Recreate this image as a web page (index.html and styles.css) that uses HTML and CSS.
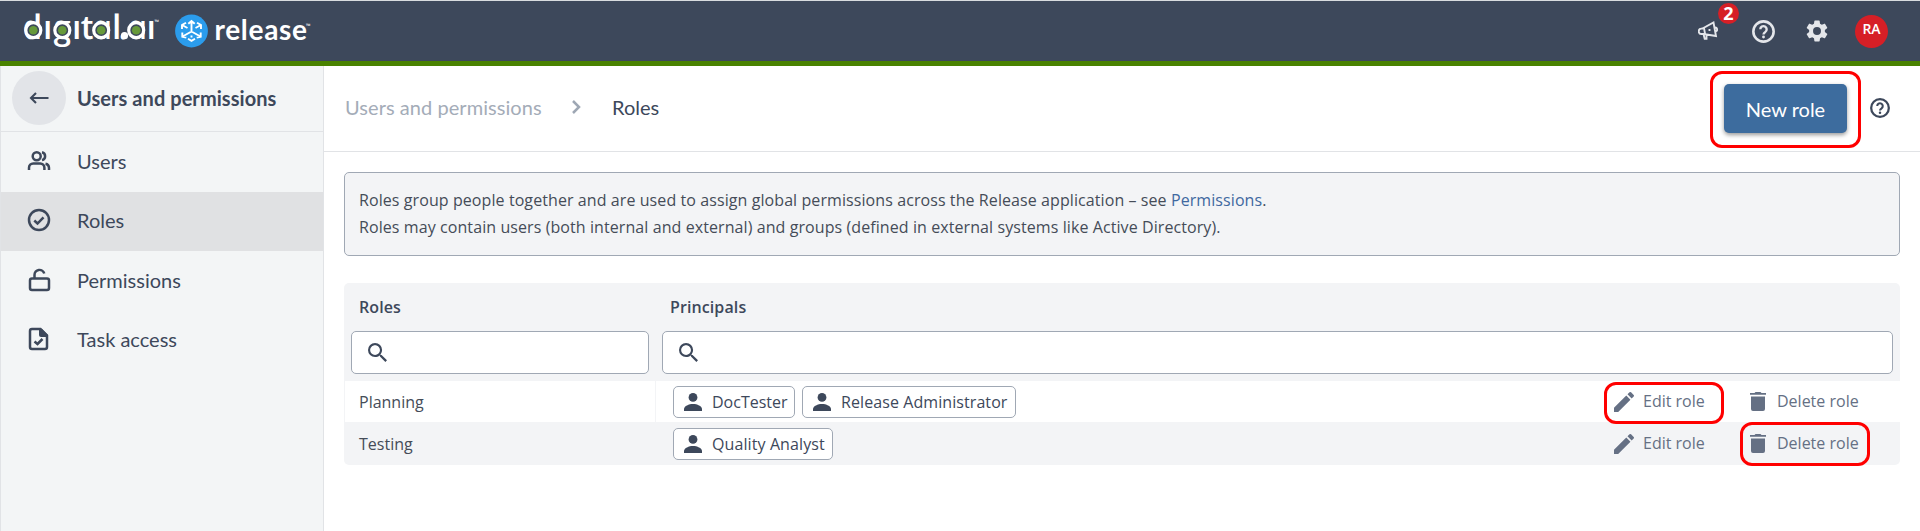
FILE: index.html
```html
<!DOCTYPE html>
<html lang="en">
<head>
<meta charset="utf-8">
<title>Roles</title>
<link rel="stylesheet" href="styles.css">
</head>
<body>
<svg class="defs" width="0" height="0">
  <symbol id="help" viewBox="0 0 24 24"><circle cx="12" cy="12" r="10.6" fill="none" stroke="currentColor" stroke-width="2.700"/><path d="M8.7 9.7a3.3 3.3 0 1 1 5.2 2.7c-1.2.8-1.9 1.3-1.9 2.6" fill="none" stroke="currentColor" stroke-width="2.500"/><circle cx="12" cy="17.7" r="1.5" fill="currentColor"/></symbol>
  <symbol id="search" viewBox="3 3 17.5 17.5"><path fill="currentColor" d="M15.5 14h-.79l-.28-.27A6.471 6.471 0 0 0 16 9.500 6.500 6.500 0 1 0 9.500 16c1.610 0 3.090-.59 4.230-1.570l.27.28v.79l5 4.990L20.490 19l-4.990-5zm-6 0C7.010 14 5 11.990 5 9.500S7.010 5 9.500 5 14 7.010 14 9.500 11.990 14 9.500 14z"/></symbol>
  <symbol id="person" viewBox="0 0 18 18"><circle cx="9" cy="4.400" r="4.400" fill="currentColor"/><path fill="currentColor" d="M0 18v-2c0-3 5-5 9-5s9 2 9 5v2z"/></symbol>
  <symbol id="pencil" viewBox="3 3 18 18"><path fill="currentColor" d="M3 17.250V21h3.750L17.810 9.940l-3.750-3.750L3 17.250zM20.710 7.040a1 1 0 0 0 0-1.410l-2.340-2.340a1 1 0 0 0-1.410 0l-1.830 1.830 3.750 3.750 1.830-1.830z"/></symbol>
  <symbol id="trash" viewBox="0 0 16 19"><path fill="currentColor" d="M1 4.500h14V17a2 2 0 0 1-2 2H3a2 2 0 0 1-2-2zM0 1h4.500L5.500 0h5l1 1H16v1.800H0z"/></symbol>
</svg>
<header class="topbar">
  <svg class="logo" width="320" height="60" viewBox="0 1 320 60" role="img" aria-label="digital.ai release">
    <g transform="translate(0 39.300) skewX(12)"><text class="brand" x="24.500 45 55 74 83 94.500 114 120.500 129.500 148.500">dıgıtal.aı</text></g>
    <g fill="#3d485b" stroke="#fff" stroke-width="3.200"><circle cx="33.300" cy="30.200" r="7.500"/><circle cx="62.300" cy="30.200" r="7.500"/><circle cx="101.200" cy="30.200" r="7.500"/><circle cx="136.200" cy="30.200" r="7.500"/></g>
    <g fill="#67993a"><circle cx="33.300" cy="30.200" r="4.300"/><circle cx="62.300" cy="30.200" r="4.300"/><circle cx="101.200" cy="30.200" r="4.300"/><circle cx="136.200" cy="30.200" r="4.300"/><circle cx="124.500" cy="35.700" r="3.600" fill="#fff"/></g>
    <text class="tm" x="154.500" y="24">™</text>
    <circle cx="191.500" cy="31" r="16.400" fill="#2b9cec"/>
    <g fill="none" stroke="#fff" stroke-width="1.900"><path d="M191.500 21v10.500l-9 5M191.500 31.500l9 5M188.300 23.800l3.200-2.800 3.200 2.800M182.300 32.500v4.200l4 1M200.700 32.500v4.200l-4 1M182 29v-4l4-2.300M183 25.500l4.500 2.500M201 29v-4l-4-2.300M200 25.500l-4.500 2.500M191.500 35.500v2M188 38.800l3.500 2 3.500-2"/></g>
    <text class="product" x="214.500" y="39.700" textLength="92.500">release</text>
    <text class="tm" x="306" y="27.500">™</text>
  </svg>
  <div class="tools">
    <span class="bell"><svg width="20" height="19" viewBox="0 0 20 19" fill="none" stroke="#e4e6ea" stroke-width="1.900"><path d="M4.500 7.500 15.500 1.500 18 15 5.500 13H3.700a2.700 2.700 0 0 1-.5-5.400zM6 7.200l1 5.500M8.500 13.500v4.200H6.700L5.500 13M17.200 6.500a2 2 0 0 1 .8 3.800M11.500 8v2"/></svg><b class="badge">2</b></span>
    <svg class="t-help" width="23" height="23"><use href="#help"/></svg>
    <svg class="t-gear" width="22" height="22" viewBox="2 2 20 20"><path fill="#e4e6ea" d="M19.140 12.940c.04-.3.06-.61.06-.94 0-.32-.02-.64-.07-.94l2.030-1.580a.49.49 0 0 0 .12-.61l-1.920-3.320a.49.49 0 0 0-.59-.22l-2.390.96a7 7 0 0 0-1.620-.94l-.36-2.540a.48.48 0 0 0-.48-.41h-3.840a.48.48 0 0 0-.47.41l-.36 2.540c-.59.24-1.130.57-1.620.94l-2.390-.96a.48.48 0 0 0-.59.220L2.740 8.870a.48.48 0 0 0 .12.61l2.030 1.580a7.500 7.500 0 0 0 0 1.880l-2.030 1.580a.49.49 0 0 0-.12.61l1.920 3.320c.12.22.37.29.59.22l2.390-.96c.5.38 1.030.7 1.620.94l.36 2.540c.05.24.24.41.48.41h3.840c.24 0 .44-.17.47-.41l.36-2.540a7 7 0 0 0 1.620-.94l2.390.96c.22.08.47 0 .59-.22l1.920-3.320a.48.48 0 0 0-.12-.61zM12 15.600a3.600 3.600 0 1 1 0-7.200 3.600 3.600 0 0 1 0 7.200z"/></svg>
    <span class="avatar">RA</span>
  </div>
</header>
<div class="shell">
  <nav class="sidebar">
    <div class="side-head"><span class="back"><svg width="20" height="12" viewBox="0 0 20 12" fill="none" stroke="currentColor" stroke-width="2.100"><path d="M19.500 6H2M7 1 2 6l5 5"/></svg></span><span>Users and permissions</span></div>
    <a class="item"><svg width="24" height="24" viewBox="0 0 24 24"><g class="line"><circle cx="9.700" cy="7.200" r="4"/><path d="M2 21v-2.300a4.200 4.200 0 0 1 4.200-4.200h7a4.200 4.200 0 0 1 4.200 4.200V21M15 3.300a4 4 0 0 1 0 7.800M18.500 14.700a4.200 4.200 0 0 1 3.500 4V21"/></g></svg><span>Users</span></a>
    <a class="item active"><svg width="24" height="24" viewBox="0 0 24 24"><g class="line"><circle cx="12" cy="12" r="10"/><path d="m7.300 12.500 3.200 3 6-6.200"/></g></svg><span>Roles</span></a>
    <a class="item"><svg width="24" height="24" viewBox="0 0 24 24"><g class="line"><rect x="3" y="10.500" width="19" height="11.500" rx="2"/><path d="M7.500 10.500V7a5 5 0 0 1 9.800-1.500"/></g></svg><span>Permissions</span></a>
    <a class="item"><svg width="24" height="24" viewBox="0 0 24 24"><g class="line"><path d="M13.500 2H5a2 2 0 0 0-2 2v16a2 2 0 0 0 2 2h13a2 2 0 0 0 2-2V8.500zM7.500 14.500l3 2.500 5-5"/></g><path fill="currentColor" d="M12 2h3l6 6v2h-7a2 2 0 0 1-2-2z"/></svg><span>Task access</span></a>
  </nav>
  <main class="main">
    <div class="crumbs">
      <span class="muted">Users and permissions</span>
      <svg class="chev" width="9" height="14" viewBox="0 0 9 14"><path d="m1 1 6 6-6 6" fill="none" stroke="#9ea7b4" stroke-width="2.500"/></svg>
      <span class="here">Roles</span>
      <span class="new marked">New role</span>
      <svg class="c-help" width="20" height="20"><use href="#help"/></svg>
    </div>
    <div class="info"><p>Roles group people together and are used to assign global permissions across the Release application – see <a>Permissions</a>.</p><p>Roles may contain users (both internal and external) and groups (defined in external systems like Active Directory).</p></div>
    <section class="table">
      <div class="row head"><b>Roles</b><b>Principals</b></div>
      <div class="filters"><div class="field"><svg width="19" height="19"><use href="#search"/></svg></div><div class="field"><svg width="19" height="19"><use href="#search"/></svg></div></div>
      <div class="row plain">
        <div class="name">Planning</div>
        <div class="chips"><span class="chip"><svg width="18" height="18"><use href="#person"/></svg><span>DocTester</span></span><span class="chip wide"><svg width="18" height="18"><use href="#person"/></svg><span>Release Administrator</span></span></div>
        <div class="actions"><a class="act edit marked"><svg width="20" height="20"><use href="#pencil"/></svg><span>Edit role</span></a><a class="act del"><svg width="16" height="19"><use href="#trash"/></svg><span>Delete role</span></a></div>
      </div>
      <div class="row last">
        <div class="name">Testing</div>
        <div class="chips"><span class="chip mid"><svg width="18" height="18"><use href="#person"/></svg><span>Quality Analyst</span></span></div>
        <div class="actions"><a class="act edit"><svg width="20" height="20"><use href="#pencil"/></svg><span>Edit role</span></a><a class="act del marked"><svg width="16" height="19"><use href="#trash"/></svg><span>Delete role</span></a></div>
      </div>
    </section>
  </main>
</div>
</body>
</html>
```
FILE: styles.css
```css
*, *::after { box-sizing: border-box; }
body { margin: 0; height: 531px; overflow: hidden; background: #fff; color: #3d485b; font: 16px/27px "Open Sans", "Noto Sans", sans-serif; }
svg { display: block; flex: none; }
p { margin: 0; }
.defs { position: absolute; }

.topbar { height: 66px; border-top: 1px solid #d9dcdf; border-bottom: 5px solid #498200; background: #3d485b; display: flex; justify-content: space-between; }
.brand { font: italic 600 33.500px "Open Sans", sans-serif; fill: #fff; }
.product { font: 700 28px Lato, sans-serif; fill: #fff; }
.tm { font: 6px "Open Sans", sans-serif; fill: #fff; }
.tools { display: flex; align-items: center; height: 60px; padding-right: 32px; color: #e4e6ea; }
.bell { position: relative; margin: 0 34px 2px 0; }
.badge { position: absolute; left: 20px; top: -18px; width: 21px; height: 21px; border-radius: 50%; background: #d61f26; color: #fff; font: 700 18px/21px "Open Sans", sans-serif; text-align: center; }
.t-help { margin-right: 31px; }
.t-gear { margin-right: 27px; }
.avatar { width: 33px; height: 33px; border-radius: 50%; background: #d61f26; color: #fff; font: 600 14px/27px "Open Sans", sans-serif; text-align: center; }

.shell { display: flex; height: 465px; }
.sidebar { width: 324px; border: solid #e1e3e6; border-width: 0 1px; background: #f3f5f6; font: 20px/24px Lato, sans-serif; }
.side-head { height: 66px; border-bottom: 1px solid #e1e3e6; display: flex; align-items: center; padding: 0 0 2px 11px; gap: 11px; font-weight: 700; letter-spacing: .06px; }
.back { width: 54px; height: 54px; border-radius: 50%; background: #e2e4e8; display: grid; place-items: center; }
.item { display: flex; align-items: center; height: 59.500px; padding: 0 0 2px 26px; gap: 26px; }
.active { background: #e0e1e3; }
.line { fill: none; stroke: currentColor; stroke-width: 2.500; }

.main { flex: 1; }
.crumbs { height: 86px; border-bottom: 1px solid #e1e3e6; display: flex; align-items: center; padding: 0 30px 0 21px; font: 20px/24px Lato, sans-serif; }
.muted { color: #a4acb8; width: 197px; white-space: nowrap; letter-spacing: .06px; }
.muted, .here { padding-bottom: 4px; }
.chev { margin: 0 31px 4px 30px; }
.new { margin-left: auto; width: 123px; height: 49px; border-radius: 5px; background: #3d6c9e; color: #fff; text-align: center; line-height: 50px; box-shadow: 0 2px 4px rgba(0, 0, 0, .4); }
.c-help { margin: 0 0 2px 23px; }
.marked { position: relative; }
.marked::after { content: ""; position: absolute; border: 3px solid #f00; border-radius: 12px; }
.new.marked::after { inset: -13px -14px -15px -14px; }
.edit.marked::after { left: -10px; top: -10px; width: 120px; height: 42px; }
.del.marked::after { left: -10px; top: -12px; width: 130px; height: 44px; }

.info { margin: 20px 20px 27px; height: 84px; border: 1px solid #a0a8b4; border-radius: 5px; background: #f3f4f6; padding: 14px; color: #454c58; letter-spacing: .084px; }
.info a { color: #4068a0; }
.table { margin: 0 20px; border-radius: 5px; background: #f3f4f6; height: 182px; }
.row { display: grid; grid-template-columns: 310px 1fr 286px; align-items: center; height: 41px; }
.head { height: 48px; padding-left: 15px; grid-template-columns: 311px 1fr; font-weight: 600; }
.head b { font-weight: 600; letter-spacing: .1px; }
.filters { display: grid; grid-template-columns: 298px 1fr; gap: 13px; padding: 0 7px 7px; }
.field { height: 43px; border: 1px solid #a0a8b4; border-radius: 5px; background: #fff; padding: 11px 16px; }
.plain { background: #fff; border-left: 1px solid #f3f4f6; }
.name { padding-left: 15px; width: 312px; height: 41px; line-height: 43px; border-right: 1px solid #f3f4f6; color: #454c58; }
.plain .name { padding-left: 14px; width: 311px; }
.last { height: 43px; }
.last .name { border: 0; }
.chips { display: flex; gap: 7px; padding-left: 19px; }
.plain .chips { padding-left: 18px; }
.chip { width: 122px; height: 32px; border: 1px solid #a0a8b4; border-radius: 5px; background: #fff; display: flex; align-items: center; gap: 10px; padding-left: 10px; line-height: 28px; white-space: nowrap; }
.wide { width: 214px; letter-spacing: .08px; }
.mid { width: 160px; letter-spacing: .1px; }
.actions { display: flex; color: #657084; }
.act { display: flex; align-items: center; height: 20px; gap: 9px; }
.edit { width: 136px; }
.del { gap: 11px; }
```
